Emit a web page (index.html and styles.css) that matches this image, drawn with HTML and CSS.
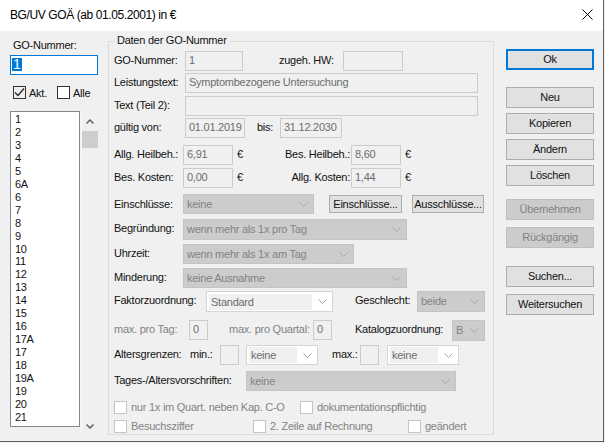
FILE: index.html
```html
<!DOCTYPE html>
<html lang="de">
<head>
<meta charset="utf-8">
<title>BG/UV GOÄ</title>
<link rel="stylesheet" href="styles.css">
</head>
<body>
<div class="win">
  <div class="titlebar">
    <span class="title-text">BG/UV GOÄ (ab 01.05.2001) in €</span>
    <svg class="close" width="11" height="11" viewBox="0 0 11 11"><path d="M0.5 0.5L10.5 10.5M10.5 0.5L0.5 10.5" stroke="#000" stroke-width="1" fill="none"/></svg>
  </div>
  <div class="content">
    <div class="left">
      <div class="go-label">GO-Nummer:</div>
      <div class="go-input"><span class="sel">1</span></div>
      <div class="checks">
        <div class="cb cb-akt"><span class="box"><svg width="11" height="11" viewBox="0 0 11 11"><path d="M1 5.5L4 8.5L10 1.5" stroke="#222" stroke-width="1.2" fill="none"/></svg></span><span>Akt.</span></div>
        <div class="cb cb-alle"><span class="box"></span><span>Alle</span></div>
      </div>
      <div class="listwrap">
        <div class="list">
          <div>1</div><div>2</div><div>3</div><div>4</div><div>5</div><div>6A</div><div>6</div><div>7</div><div>8</div><div>9</div><div>10</div><div>11</div><div>12</div><div>13</div><div>14</div><div>15</div><div>16</div><div>17A</div><div>17</div><div>18</div><div>19A</div><div>19</div><div>20</div><div>21</div>
        </div>
        <div class="vscroll">
          <div class="sb-arrow"><svg width="8" height="5" viewBox="0 0 8 5"><path d="M0.5 4.5L4 1L7.5 4.5" stroke="#606060" stroke-width="1.5" fill="none"/></svg></div>
          <div class="sb-thumb"></div>
          <div class="sb-track"></div>
          <div class="sb-arrow sb-down"><svg width="8" height="5" viewBox="0 0 8 5"><path d="M0.5 0.5L4 4L7.5 0.5" stroke="#606060" stroke-width="1.5" fill="none"/></svg></div>
        </div>
      </div>
    </div>

    <div class="group">
      <span class="legend">Daten der GO-Nummer</span>

      <div class="row r1">
        <span class="lbl w71">GO-Nummer:</span>
        <span class="tb w58">1</span>
        <span class="lbl ml36 w64">zugeh. HW:</span>
        <span class="tb w60"></span>
      </div>
      <div class="row r2">
        <span class="lbl w71">Leistungstext:</span>
        <span class="tb w293">Symptombezogene Untersuchung</span>
      </div>
      <div class="row r3">
        <span class="lbl w71">Text (Teil 2):</span>
        <span class="tb w293"></span>
      </div>
      <div class="row r4">
        <span class="lbl w71">gültig von:</span>
        <span class="tb w60">01.01.2019</span>
        <span class="lbl ml12 w23">bis:</span>
        <span class="tb w62">31.12.2030</span>
      </div>
      <div class="row r5">
        <span class="lbl w69">Allg. Heilbeh.:</span>
        <span class="tb w50">6,91</span>
        <span class="euro">€</span>
        <span class="lbl rlbl w107">Bes. Heilbeh.:</span>
        <span class="tb w50">8,60</span>
        <span class="euro">€</span>
      </div>
      <div class="row r6">
        <span class="lbl w69">Bes. Kosten:</span>
        <span class="tb w50">0,00</span>
        <span class="euro">€</span>
        <span class="lbl rlbl w107">Allg. Kosten:</span>
        <span class="tb w50">1,44</span>
        <span class="euro">€</span>
      </div>
      <div class="row r7">
        <span class="lbl w69">Einschlüsse:</span>
        <span class="combo dis w131"><span class="ctext">keine</span><svg class="arr" width="9" height="5" viewBox="0 0 9 5"><path d="M0.5 0.5L4.5 4.5L8.5 0.5" stroke="#a8a8a8" stroke-width="1" fill="none"/></svg></span>
        <span class="btn small ml15 w73">Einschlüsse...</span>
        <span class="btn small ml10 w72">Ausschlüsse...</span>
      </div>
      <div class="row r8">
        <span class="lbl w69">Begründung:</span>
        <span class="combo dis w224"><span class="ctext">wenn mehr als 1x pro Tag</span><svg class="arr" width="9" height="5" viewBox="0 0 9 5"><path d="M0.5 0.5L4.5 4.5L8.5 0.5" stroke="#a8a8a8" stroke-width="1" fill="none"/></svg></span>
      </div>
      <div class="row r9">
        <span class="lbl w69">Uhrzeit:</span>
        <span class="combo dis w171"><span class="ctext">wenn mehr als 1x am Tag</span><svg class="arr" width="9" height="5" viewBox="0 0 9 5"><path d="M0.5 0.5L4.5 4.5L8.5 0.5" stroke="#a8a8a8" stroke-width="1" fill="none"/></svg></span>
      </div>
      <div class="row r10">
        <span class="lbl w69">Minderung:</span>
        <span class="combo dis w224"><span class="ctext">keine Ausnahme</span><svg class="arr" width="9" height="5" viewBox="0 0 9 5"><path d="M0.5 0.5L4.5 4.5L8.5 0.5" stroke="#a8a8a8" stroke-width="1" fill="none"/></svg></span>
      </div>
      <div class="row r11">
        <span class="lbl w92">Faktorzuordnung:</span>
        <span class="combo ro w127"><span class="ctext field">Standard</span><svg class="arr" width="9" height="5" viewBox="0 0 9 5"><path d="M0.5 0.5L4.5 4.5L8.5 0.5" stroke="#a8a8a8" stroke-width="1" fill="none"/></svg></span>
        <span class="lbl ml22 w62">Geschlecht:</span>
        <span class="combo dis w68"><span class="ctext">beide</span><svg class="arr" width="9" height="5" viewBox="0 0 9 5"><path d="M0.5 0.5L4.5 4.5L8.5 0.5" stroke="#a8a8a8" stroke-width="1" fill="none"/></svg></span>
      </div>
      <div class="row r12">
        <span class="lbl gray w75">max. pro Tag:</span>
        <span class="tb w19">0</span>
        <span class="lbl gray ml21 w84">max. pro Quartal:</span>
        <span class="tb w19">0</span>
        <span class="lbl ml23 w97">Katalogzuordnung:</span>
        <span class="combo dis w33 tall"><span class="ctext">B</span><svg class="arr" width="9" height="5" viewBox="0 0 9 5"><path d="M0.5 0.5L4.5 4.5L8.5 0.5" stroke="#a8a8a8" stroke-width="1" fill="none"/></svg></span>
      </div>
      <div class="row r13">
        <span class="lbl w76">Altersgrenzen:</span>
        <span class="lbl w30">min.:</span>
        <span class="tb w19"></span>
        <span class="combo ro ml7 w72"><span class="ctext field">keine</span><svg class="arr" width="9" height="5" viewBox="0 0 9 5"><path d="M0.5 0.5L4.5 4.5L8.5 0.5" stroke="#a8a8a8" stroke-width="1" fill="none"/></svg></span>
        <span class="lbl ml14 w28">max.:</span>
        <span class="tb w19"></span>
        <span class="combo ro ml8 w72"><span class="ctext field">keine</span><svg class="arr" width="9" height="5" viewBox="0 0 9 5"><path d="M0.5 0.5L4.5 4.5L8.5 0.5" stroke="#a8a8a8" stroke-width="1" fill="none"/></svg></span>
      </div>
      <div class="row r14">
        <span class="lbl w132">Tages-/Altersvorschriften:</span>
        <span class="combo dis w210"><span class="ctext">keine</span><svg class="arr" width="9" height="5" viewBox="0 0 9 5"><path d="M0.5 0.5L4.5 4.5L8.5 0.5" stroke="#a8a8a8" stroke-width="1" fill="none"/></svg></span>
      </div>
      <div class="row crow r15">
        <span class="cb dcb w186"><span class="box"></span><span>nur 1x im Quart. neben Kap. C-O</span></span>
        <span class="cb dcb"><span class="box"></span><span>dokumentationspflichtig</span></span>
      </div>
      <div class="row crow r16">
        <span class="cb dcb w139"><span class="box"></span><span>Besuchsziffer</span></span>
        <span class="cb dcb w155"><span class="box"></span><span>2. Zeile auf Rechnung</span></span>
        <span class="cb dcb"><span class="box"></span><span>geändert</span></span>
      </div>
    </div>

    <div class="buttons">
      <div class="btn default b-ok">Ok</div>
      <div class="btn b-neu">Neu</div>
      <div class="btn b-std">Kopieren</div>
      <div class="btn b-std">Ändern</div>
      <div class="btn b-std">Löschen</div>
      <div class="btn disabled b-ueb">Übernehmen</div>
      <div class="btn disabled b-rueck">Rückgängig</div>
      <div class="btn b-such">Suchen...</div>
      <div class="btn b-weiter">Weitersuchen</div>
    </div>
  </div>
</div>
</body>
</html>
```

FILE: styles.css
```css
* { box-sizing: border-box; }
html, body {
  margin: 0;
  padding: 0;
  background: #f0f0f0;
}
body {
  font-family: "Liberation Sans", Arial, sans-serif;
  font-size: 11px;
  letter-spacing: -0.25px;
  color: #111;
}
.win {
  width: 604px;
  height: 442px;
  border-right: 1px solid #5f5f5f;
  border-bottom: 1px solid #5f5f5f;
  background: #f0f0f0;
  display: flex;
  flex-direction: column;
}
.titlebar {
  height: 31px;
  background: #fff;
  display: flex;
  align-items: center;
  justify-content: space-between;
  padding: 0 10px 0 10px;
}
.title-text {
  font-size: 12px;
  letter-spacing: -0.4px;
  padding-bottom: 2px;
  color: #000;
}
.close { margin-top: -2px; }

.content {
  display: flex;
  padding-left: 10px;
  flex: 1;
}

/* left column */
.left { width: 88px; display: flex; flex-direction: column; }
.go-label { margin-top: 8px; line-height: 13px; padding-left: 3px; }
.go-input {
  margin-top: 3px;
  height: 20px;
  width: 88px;
  border: 1px solid #0078d7;
  background: #fff;
  padding: 2px 0 0 1px;
}
.sel {
  display: inline-block;
  background: #0078d7;
  color: #fff;
  font-size: 14px;
  line-height: 12px;
  height: 13px;
  padding: 0 1px;
}
.checks { margin-top: 11px; display: flex; height: 13px; padding-left: 3px; }
.cb { display: flex; align-items: center; }
.cb .box {
  flex: none;
  width: 13px;
  height: 13px;
  border: 1px solid #333;
  background: #fff;
  margin-right: 3px;
  display: flex;
  align-items: center;
  justify-content: center;
}
.cb-akt { width: 44px; }
.cb-akt .box { background: transparent; }
.listwrap { margin-top: 12px; display: flex; }
.list {
  width: 70px;
  height: 316px;
  border: 1px solid #828790;
  background: #fff;
  padding: 1px 0 0 4px;
  line-height: 12.95px;
  letter-spacing: -0.4px;
  overflow: hidden;
}
.vscroll {
  margin-left: 1px;
  width: 17px;
  height: 324px;
  border-left: 1px solid #fbfbfb;
  display: flex;
  flex-direction: column;
}
.sb-arrow { height: 20px; display: flex; align-items: center; justify-content: center; }
.sb-thumb { height: 17px; background: #cdcdcd; }
.sb-track { flex: 1; }
.sb-down { height: 18px; align-items: flex-start; padding-top: 7px; }

/* group box */
.group {
  position: relative;
  margin-left: 10px;
  margin-top: 10px;
  width: 386px;
  height: 394px;
  border: 1px solid #dcdcdc;
  padding: 9px 0 0 5px;
}
.legend {
  position: absolute;
  top: -8px;
  left: 6px;
  padding: 0 2px;
  background: #f0f0f0;
  line-height: 13px;
}
.row { display: flex; align-items: flex-start; height: 20px; }
.r2 { margin-top: 2px; }
.r3 { margin-top: 3px; }
.r4 { margin-top: 2px; }
.r5 { margin-top: 7px; }
.r6 { margin-top: 3px; }
.r7 { margin-top: 6px; align-items: center; }
.r8 { margin-top: 5px; height: 21px; }
.r9 { margin-top: 4px; }
.r10 { margin-top: 4px; }
.r11 { margin-top: 3px; height: 21px; }
.r12 { margin-top: 8px; }
.r13 { margin-top: 5px; }
.r14 { margin-top: 6px; }
.r15 { margin-top: 9px; }
.r16 { margin-top: 5px; }
.crow { height: 14px; }

.lbl { line-height: 18px; white-space: nowrap; flex: none; }
.rlbl { text-align: right; padding-right: 1px; }
.gray { color: #838383; }
.euro { margin-left: 4px; width: 7px; line-height: 18px; }

.tb {
  flex: none;
  height: 20px;
  border: 1px solid #cccccc;
  background: #f0f0f0;
  color: #6d6d6d;
  line-height: 16px;
  padding: 0 0 2px 3px;
  white-space: nowrap;
  overflow: hidden;
}
.combo {
  flex: none;
  height: 100%;
  display: flex;
  align-items: center;
  justify-content: space-between;
  border: 1px solid #cccccc;
  padding: 0 5px 0 3px;
  color: #838383;
  white-space: nowrap;
}
.combo.dis { background: #cccccc; border-color: #c4c4c4; }
.combo.ro { background: #fff; border-color: #d5d5d5; padding-left: 2px; }
.combo.tall { height: 21px; }
.ctext { line-height: 16px; padding-bottom: 1px; }
.ctext.field {
  background: #f0f0f0;
  color: #6d6d6d;
  flex: 1;
  padding-left: 2px;
  margin-right: 6px;
  height: 16px;
}
.arr { flex: none; }

.dcb { color: #838383; }
.dcb .box { border-color: #c4c4c4; margin-right: 4px; }
.crow .cb { line-height: 14px; }

.btn {
  flex: none;
  height: 21px;
  border: 1px solid #adadad;
  background: #e1e1e1;
  display: flex;
  align-items: center;
  justify-content: center;
  padding-bottom: 1px;
  white-space: nowrap;
}
.btn.small { height: 18px; }
.btn.default { border: 2px solid #0078d7; }
.btn.disabled { background: #cccccc; border-color: #bfbfbf; color: #838383; }

/* widths and spacing */
.w19 { width: 19px; }
.w23 { width: 23px; }
.w28 { width: 28px; }
.w30 { width: 30px; }
.w33 { width: 33px; }
.w50 { width: 50px; }
.w58 { width: 58px; }
.w60 { width: 60px; }
.w62 { width: 62px; }
.w64 { width: 64px; }
.w68 { width: 68px; }
.w69 { width: 69px; }
.w71 { width: 71px; }
.w72 { width: 72px; }
.w73 { width: 73px; }
.w75 { width: 75px; }
.w76 { width: 76px; }
.w84 { width: 84px; }
.w92 { width: 92px; }
.w97 { width: 97px; }
.w107 { width: 107px; }
.w127 { width: 127px; }
.w131 { width: 131px; }
.w132 { width: 132px; }
.w139 { width: 139px; }
.w155 { width: 155px; }
.w171 { width: 171px; }
.w186 { width: 186px; }
.w210 { width: 210px; }
.w224 { width: 224px; }
.w293 { width: 293px; }
.ml7 { margin-left: 7px; }
.ml8 { margin-left: 8px; }
.ml10 { margin-left: 10px; }
.ml12 { margin-left: 12px; }
.ml14 { margin-left: 14px; }
.ml15 { margin-left: 15px; }
.ml21 { margin-left: 21px; }
.ml22 { margin-left: 22px; }
.ml23 { margin-left: 23px; }
.ml36 { margin-left: 36px; }

/* buttons column */
.buttons {
  margin-left: 12px;
  width: 88px;
  display: flex;
  flex-direction: column;
}
.b-ok { margin-top: 18px; }
.b-neu { margin-top: 17px; }
.b-std { margin-top: 5px; }
.b-ueb { margin-top: 13px; }
.b-rueck { margin-top: 7px; }
.b-such { margin-top: 18px; }
.b-weiter { margin-top: 7px; }
```
